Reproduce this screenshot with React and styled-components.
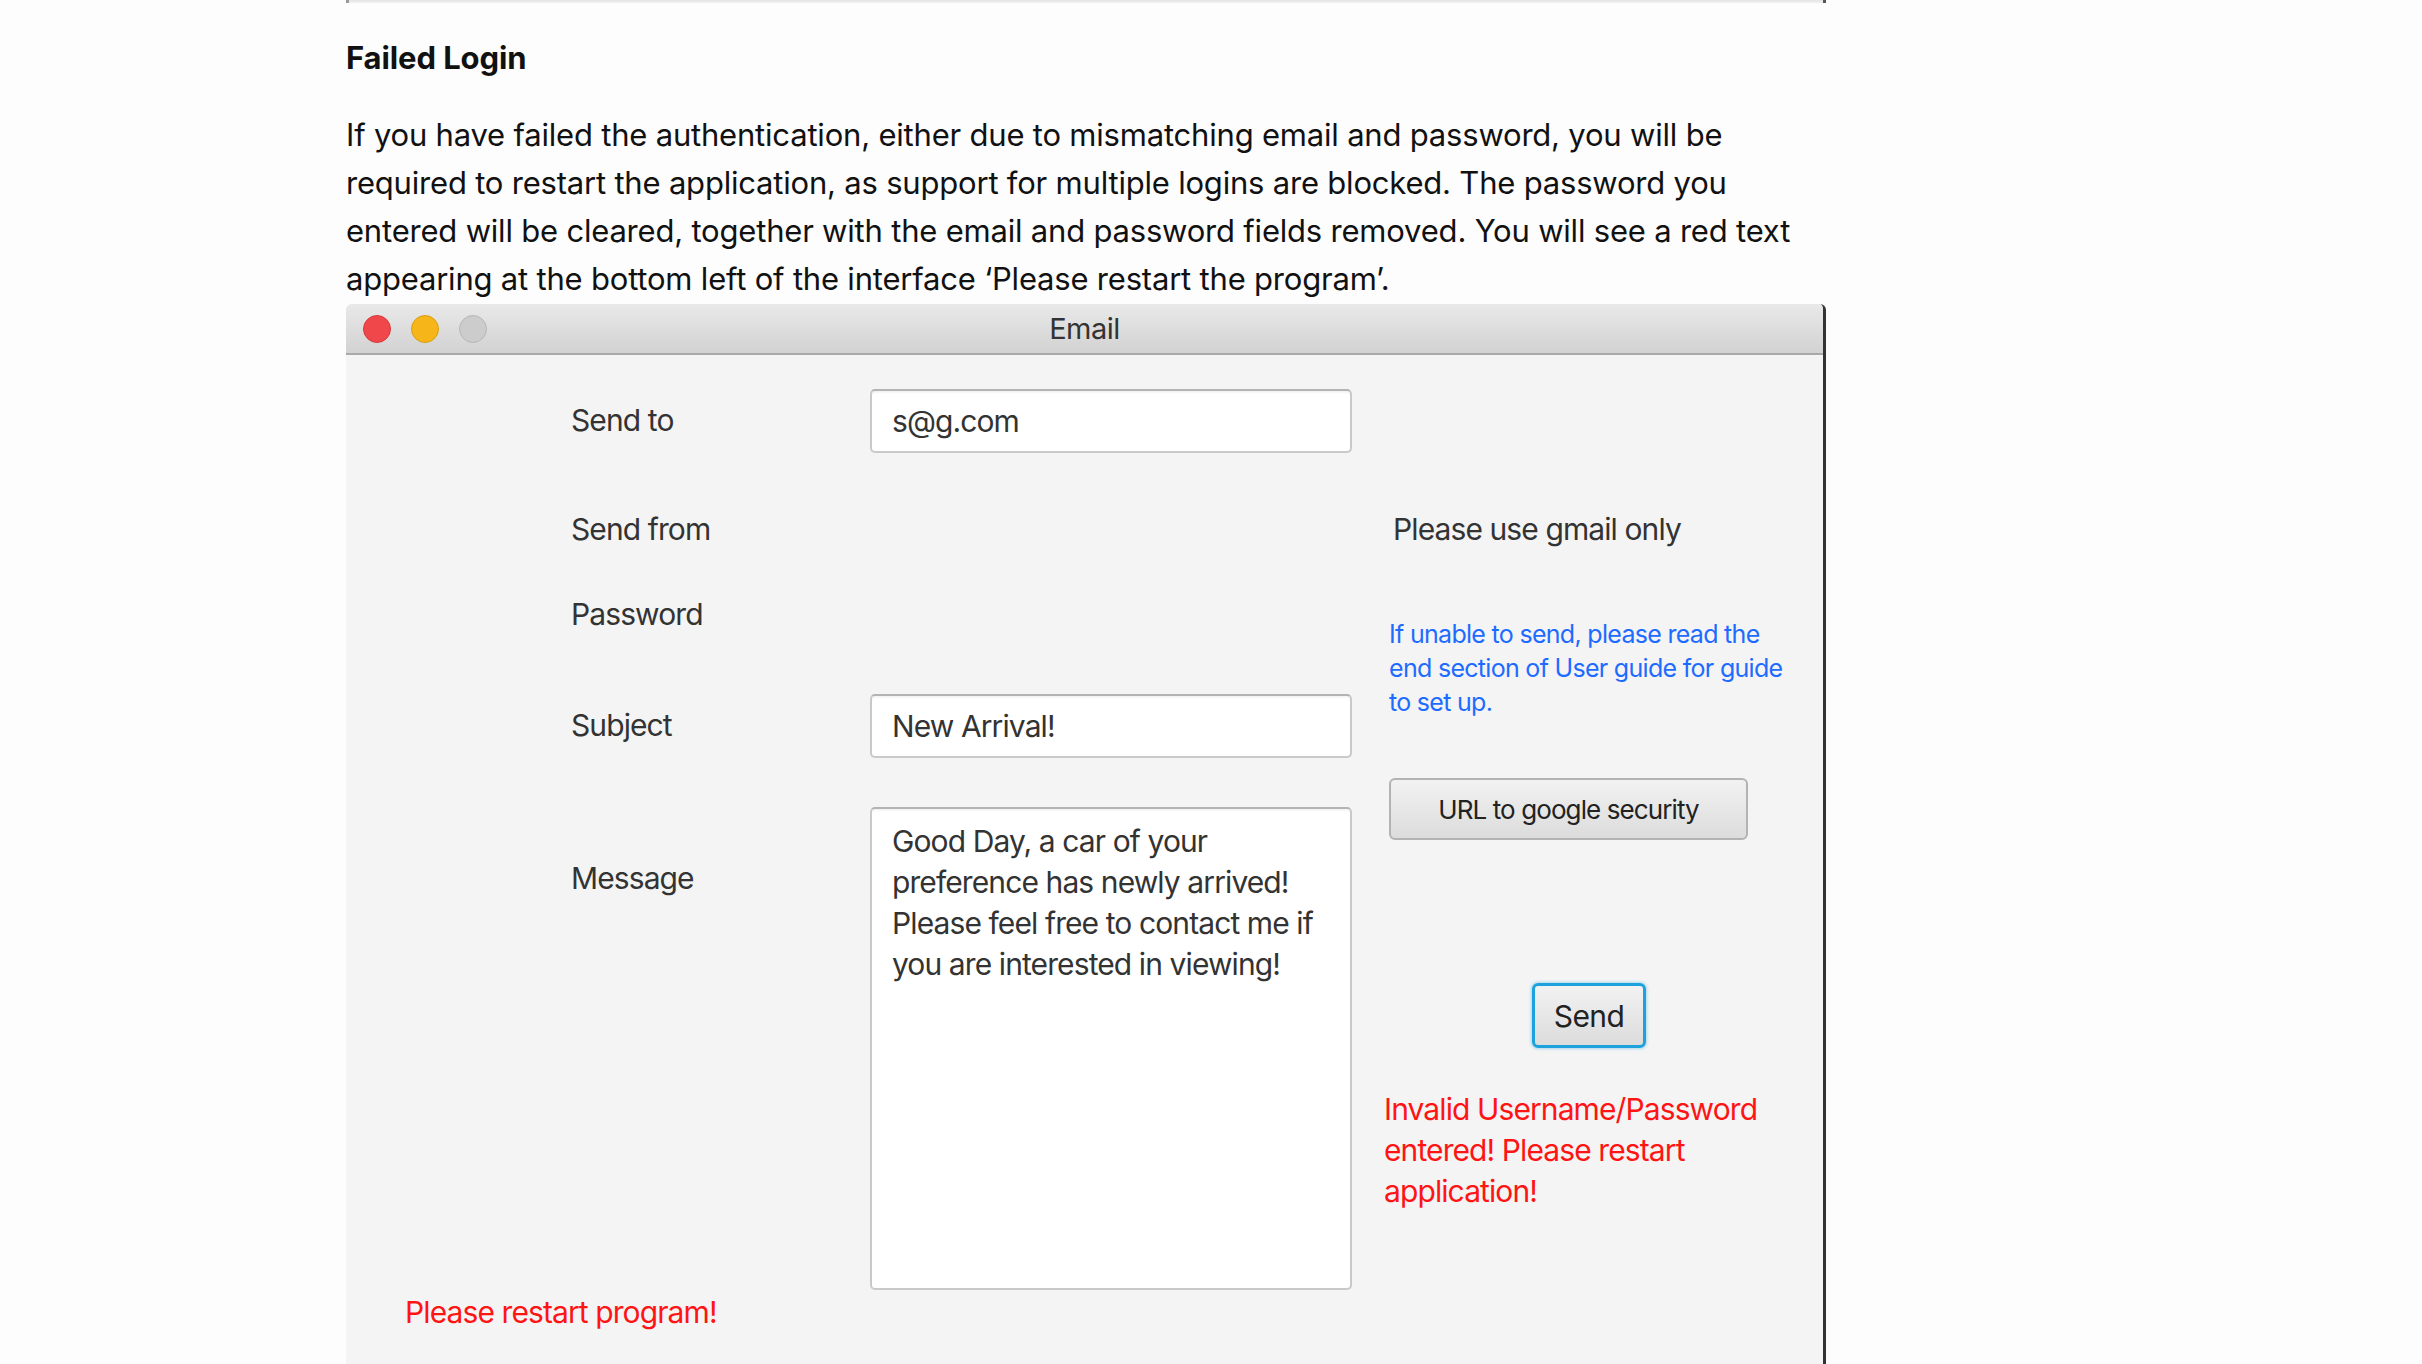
import React from "react";
import styled, { createGlobalStyle } from "styled-components";

const GlobalStyle = createGlobalStyle`
  html, body {
    margin: 0;
    padding: 0;
    background: #fdfdfd;
    overflow: hidden;
  }
  body {
    font-family: Inter, "Open Sans", "Liberation Sans", sans-serif;
  }
`;

const Page = styled.div`
  width: 1480px;
  margin-left: 346px;
  height: 1364px;
  display: flex;
  flex-direction: column;
`;

const PrevEdge = styled.div`
  height: 3px;
  background: linear-gradient(to bottom, #e4e4e4, #f2f2f2);
  border-right: 3px solid #555;
  border-left: 3px solid #999;
`;

const Heading = styled.h3`
  margin: 36px 0 0;
  font-size: 31px;
  line-height: 38px;
  font-weight: 700;
  color: #111;
  letter-spacing: -0.1px;
`;

const Paragraph = styled.p`
  margin: 34px 0 0;
  font-size: 31px;
  line-height: 48px;
  color: #111;
  letter-spacing: -0.2px;
  white-space: nowrap;
`;

const Window = styled.div`
  margin-top: 1px;
  flex: 1;
  display: flex;
  flex-direction: column;
  background: #f4f4f4;
  border-right: 3px solid #333;
  border-top-right-radius: 6px;
  border-top-left-radius: 6px;
  overflow: hidden;
`;

const TitleBar = styled.div`
  height: 49px;
  flex-shrink: 0;
  display: flex;
  align-items: center;
  position: relative;
  padding-left: 17px;
  gap: 20px;
  background: linear-gradient(to bottom, #e9e9e9, #d2d2d2);
  border-bottom: 2px solid #a9a9a9;
`;

const Light = styled.span`
  width: 28px;
  height: 28px;
  border-radius: 50%;
  background: ${(p) => p.color};
  border: 1px solid ${(p) => p.edge};
  box-sizing: border-box;
`;

const Title = styled.div`
  position: absolute;
  left: 0;
  right: 0;
  text-align: center;
  font-size: 29px;
  color: #333;
  letter-spacing: -0.5px;
  pointer-events: none;
`;

const Body = styled.div`
  display: flex;
  padding: 34px 0 0 225px;
  font-size: 30px;
  color: #333;
  letter-spacing: -0.9px;
  white-space: nowrap;
`;

const LabelCol = styled.div`
  width: 299px;
  display: flex;
  flex-direction: column;
`;

const Label = styled.div`
  height: ${(p) => p.h || 40}px;
  line-height: ${(p) => p.h || 40}px;
  margin-top: ${(p) => p.mt || 0}px;
`;

const FieldCol = styled.div`
  width: 482px;
  display: flex;
  flex-direction: column;
`;

const Field = styled.div`
  box-sizing: border-box;
  height: ${(p) => p.h}px;
  margin-top: ${(p) => p.mt || 0}px;
  background: #fff;
  border: 2px solid #c9c9c9;
  border-top-color: #b4b4b4;
  border-radius: 5px;
  box-shadow: inset 0 3px 3px -2px rgba(0, 0, 0, 0.08);
  padding: ${(p) => (p.multi ? "12px 20px" : "0 20px")};
  line-height: ${(p) => (p.multi ? "41px" : `${p.h - 4}px`)};
  color: #333;
`;

const SideCol = styled.div`
  width: 400px;
  margin-left: 37px;
  display: flex;
  flex-direction: column;
  align-items: flex-start;
`;

const Note = styled.div`
  margin-top: 120px;
  padding-left: 4px;
  line-height: 40px;
`;

const Hint = styled.div`
  margin-top: 68px;
  font-size: 25px;
  line-height: 34px;
  color: #1e6bff;
  letter-spacing: -0.7px;
`;

const FxButton = styled.button`
  box-sizing: border-box;
  font-family: inherit;
  color: #222;
  border-radius: 6px;
  background: linear-gradient(to bottom, #f2f2f2, #dcdcdc);
  cursor: pointer;
  padding: 0;
`;

const UrlButton = styled(FxButton)`
  margin-top: 59px;
  width: 359px;
  height: 62px;
  font-size: 26px;
  border: 2px solid #b3b3b3;
  letter-spacing: -0.9px;
`;

const SendButton = styled(FxButton)`
  margin: 143px 0 0 143px;
  width: 114px;
  height: 65px;
  font-size: 30px;
  border: 3px solid #1ea2dd;
  letter-spacing: -0.6px;
  box-shadow: 0 0 3px 1px rgba(30, 162, 221, 0.35);
`;

const ErrorText = styled.div`
  margin: 41px 0 0 -5px;
  color: #ff1414;
  line-height: 41px;
`;

const Footer = styled.div`
  padding-left: 59px;
  margin-top: 2px;
  line-height: 40px;
  font-size: 30px;
  color: #ff1414;
  letter-spacing: -0.9px;
`;

export default function App() {
  return (
    <>
      <GlobalStyle />
      <Page>
        <PrevEdge />
        <Heading>Failed Login</Heading>
        <Paragraph>
          If you have failed the authentication, either due to mismatching email and password, you will be
          <br />
          required to restart the application, as support for multiple logins are blocked. The password you
          <br />
          entered will be cleared, together with the email and password fields removed. You will see a red text
          <br />
          appearing at the bottom left of the interface ‘Please restart the program’.
        </Paragraph>
        <Window>
          <TitleBar>
            <Light color="#f0474a" edge="#d53a3d" />
            <Light color="#f6b518" edge="#dc9d12" />
            <Light color="#cccccc" edge="#b7b7b7" />
            <Title>Email</Title>
          </TitleBar>
          <Body>
            <LabelCol>
              <Label h={63}>Send to</Label>
              <Label mt={57}>Send from</Label>
              <Label mt={45}>Password</Label>
              <Label h={63} mt={60}>Subject</Label>
              <Label mt={101}>Message</Label>
            </LabelCol>
            <FieldCol>
              <Field h={64}>s@g.com</Field>
              <Field h={64} mt={241}>New Arrival!</Field>
              <Field h={483} mt={49} multi>
                Good Day, a car of your
                <br />
                preference has newly arrived!
                <br />
                Please feel free to contact me if
                <br />
                you are interested in viewing!
              </Field>
            </FieldCol>
            <SideCol>
              <Note>Please use gmail only</Note>
              <Hint>
                If unable to send, please read the
                <br />
                end section of User guide for guide
                <br />
                to set up.
              </Hint>
              <UrlButton>URL to google security</UrlButton>
              <SendButton>Send</SendButton>
              <ErrorText>
                Invalid Username/Password
                <br />
                entered! Please restart
                <br />
                application!
              </ErrorText>
            </SideCol>
          </Body>
          <Footer>Please restart program!</Footer>
        </Window>
      </Page>
    </>
  );
}
